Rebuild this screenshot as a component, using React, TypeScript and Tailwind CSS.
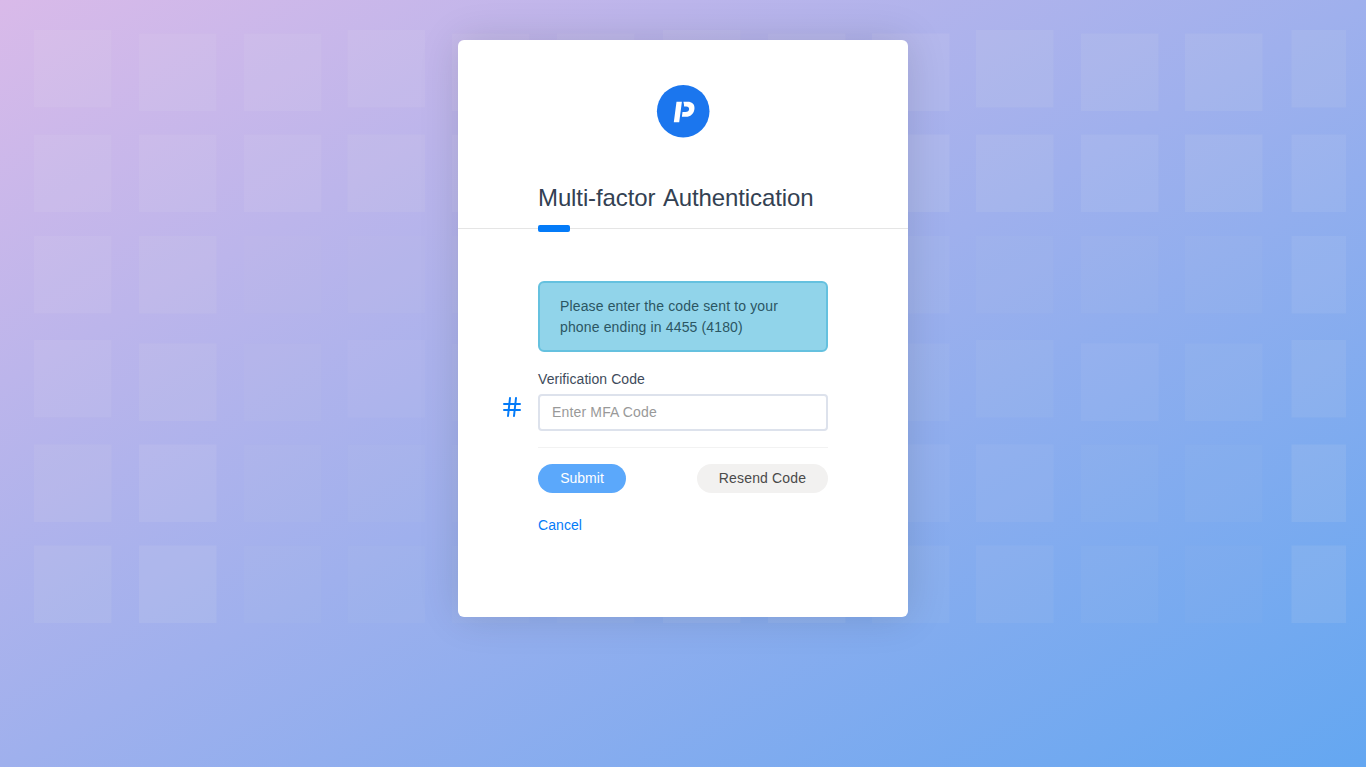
import React from "react";
import { Hash } from "lucide-react";

const columns = [34, 139, 244, 347.5, 452, 557, 663, 768, 872, 976, 1081, 1185, 1291.5];

// Each row: top offset on every third column, top offset elsewhere, tile opacities.
const rows = [
  { a: 30, b: 33.5, o: [8, 7, 7, 8, 8, 7, 8, 8, 10, 9, 9, 9, 9] },
  { a: 134.5, b: 134.5, o: [7, 8, 8, 9, 8, 7, 8, 8, 10, 9, 8, 9, 8] },
  { a: 236, b: 236, o: [8, 9, 4, 4, 4, 4, 5, 5, 5, 4, 4, 4, 8] },
  { a: 340, b: 343.5, o: [8, 9, 4, 5, 4, 4, 5, 5, 5, 5, 6, 5, 9] },
  { a: 444.5, b: 444.5, o: [9, 10, 4, 4, 4, 4, 5, 5, 6, 6, 4, 4, 10] },
  { a: 545.5, b: 545.5, o: [9, 10, 4, 4, 4, 4, 8, 8, 5, 6, 4, 3, 10] },
];

function Tiles() {
  return (
    <svg aria-hidden="true" className="absolute inset-0 h-[767px] w-[1366px]" fill="#eeeeee">
      {rows.map((row, r) =>
        columns.map((x, c) => (
          <rect
            key={`${r}-${c}`}
            x={x}
            y={c % 3 === 0 ? row.a : row.b}
            width={c === 12 ? 54.5 : 77.5}
            height={77.5}
            fillOpacity={row.o[c] / 100}
          />
        )),
      )}
    </svg>
  );
}

function Logo() {
  return (
    <svg className="block size-[54px]" viewBox="0 0 54 54">
      <circle cx="27.2" cy="27.2" r="26.3" fill="#1b76ee" />
      <path
        fill="#fff"
        d="M20.5 17.7h5.4l-2.7 20.6h-5.4zM27.4 17.7h4.3c4.3 0 6.8 2.3 6.8 6.2 0 5.2-3.5 8.8-9 8.8h-3.6l.6-4.8h2.9c2.4 0 3.7-1 3.7-2.9 0-1.6-.9-2.5-2.8-2.5h-2.2c0-1.6-.2-3.2-.7-4.8z"
      />
    </svg>
  );
}

export default function App() {
  return (
    <div className="relative h-[767px] w-full overflow-hidden bg-[linear-gradient(to_bottom_right,#d9bae9,#9fb0ed_50%,#64a7f1)] pt-10 font-['Liberation_Sans',Arial,sans-serif] text-sm text-[#3e4b5b]">
      <Tiles />
      <main className="relative mx-auto h-[577px] w-[450px] rounded-md bg-white shadow-[0_0_40px_rgba(0,0,0,0.13)]">
        <div className="flex justify-center pt-[44px]">
          <Logo />
        </div>
        <header className="relative mt-[44px] h-[47px] border-b border-black/10 px-20">
          <h1 className="pt-[1px] text-2xl leading-[29px] tracking-[-0.11px] whitespace-nowrap text-[#334152] [word-spacing:2.3px]">
            Multi-factor Authentication
          </h1>
          <span className="absolute -bottom-1 left-20 h-[7px] w-8 rounded-[2px] bg-[#047bf8]" />
        </header>
        <form className="px-20 pt-[52px]" onSubmit={(e) => e.preventDefault()}>
          <div className="h-[71px] rounded-md border-2 border-[#65c1df] bg-[#91d4ea] px-5 py-[12.5px] leading-[21px] tracking-[0.14px] text-[#2b5663]">
            Please enter the code sent to your phone ending in 4455 (4180)
          </div>
          <label className="mt-[17px] block leading-[21px] tracking-[0.06px]" htmlFor="code">
            Verification Code
          </label>
          <div className="relative mt-1">
            <Hash className="absolute top-[1px] -left-[38px] size-6 text-[#047bf8]" />
            <input
              id="code"
              className="block h-[37px] w-full rounded border-2 border-[#dde2ec] bg-white px-3 pb-[2px] tracking-[0.16px] placeholder:text-[#999999]"
              placeholder="Enter MFA Code"
            />
          </div>
          <div className="mt-4 flex justify-between border-t border-black/5 pt-4">
            <button className="h-[29px] w-[88px] rounded-full bg-[#5ba8fb] pb-[2px] text-white">Submit</button>
            <button className="h-[29px] w-[131px] rounded-full bg-[#f2f1f0] pb-[2px] tracking-[0.15px] text-[#4a4a4a]">
              Resend Code
            </button>
          </div>
          <a className="mt-[22px] block w-fit leading-[21px] tracking-[0.08px] text-[#047bf8]" href="#">
            Cancel
          </a>
        </form>
      </main>
    </div>
  );
}
